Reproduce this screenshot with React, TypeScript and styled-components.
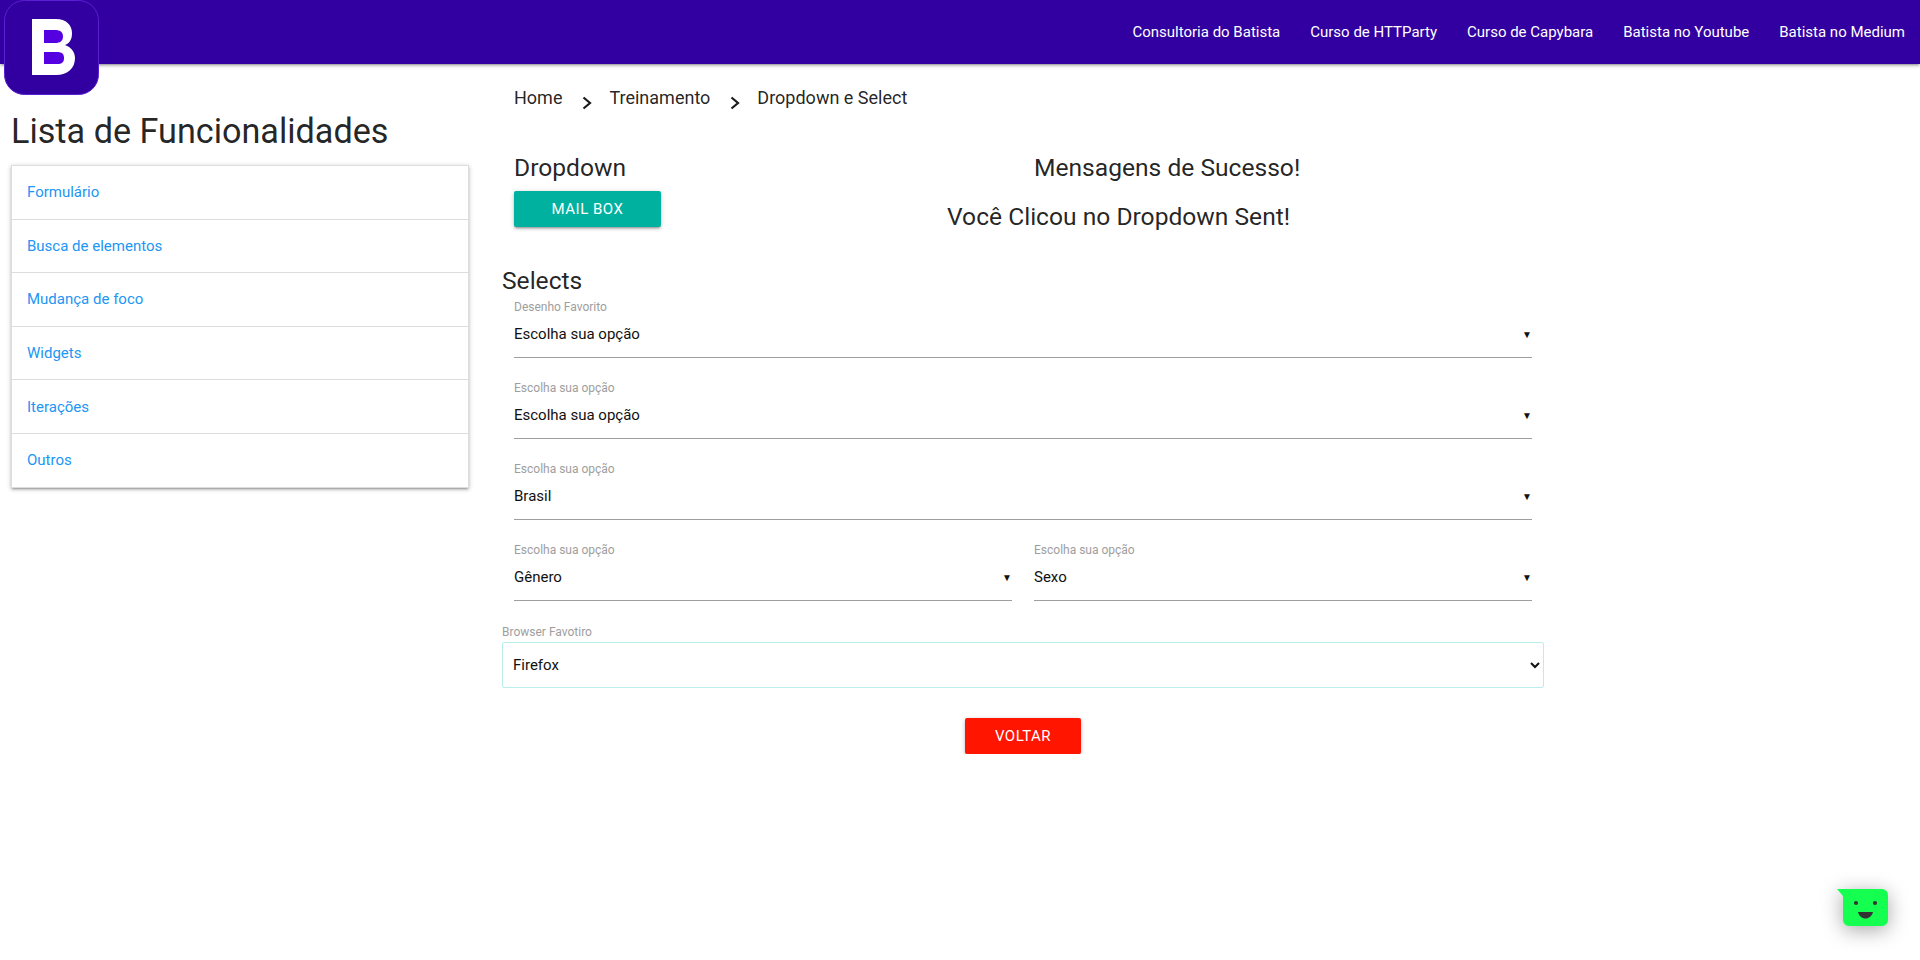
import styled, { createGlobalStyle } from 'styled-components';

const GlobalStyle = createGlobalStyle`
  html, body {
    margin: 0;
    padding: 0;
    background: #fff;
    font-family: Roboto, "Liberation Sans", sans-serif;
    font-size: 15px;
    color: rgba(0, 0, 0, 0.87);
  }
  * {
    box-sizing: border-box;
  }
`;

const Nav = styled.nav`
  height: 64px;
  background: #3200a0;
  box-shadow: 0 2px 2px 0 rgba(0, 0, 0, 0.14), 0 3px 1px -2px rgba(0, 0, 0, 0.12), 0 1px 5px 0 rgba(0, 0, 0, 0.2);
  display: flex;
  justify-content: flex-end;
`;

const NavLink = styled.a`
  padding: 0 15px;
  line-height: 64px;
  font-size: 15px;
  color: #fff;
`;

const Logo = styled.svg`
  position: absolute;
  left: 4px;
  top: 0;
  width: 95px;
  height: 95px;
`;

const Page = styled.div`
  display: flex;
`;

const Sidebar = styled.aside`
  width: 480px;
  padding: 0 11px;
`;

const SideTitle = styled.h4`
  margin: 49px 0 15px;
  font-size: 34.2px;
  line-height: 37px;
  font-weight: 400;
`;

const Collection = styled.ul`
  margin: 0;
  padding: 0;
  list-style: none;
  background: #fff;
  border: 1px solid #ddd;
  border-bottom: 0;
  box-shadow: 0 2px 2px 0 rgba(0, 0, 0, 0.14), 0 3px 1px -2px rgba(0, 0, 0, 0.12), 0 1px 5px 0 rgba(0, 0, 0, 0.2);
`;

const CollectionItem = styled.li`
  height: 53.6px;
  padding-left: 15px;
  border-bottom: 1px solid #ddd;
  display: flex;
  align-items: center;
  font-size: 15px;
  color: #2196f3;
`;

const Main = styled.main`
  width: 1042px;
  margin-left: 22px;
`;

const Breadcrumb = styled.div`
  display: flex;
  align-items: center;
  height: 42px;
  margin: 12px 0 0 12px;
  font-size: 18px;
`;

const Chevron = styled.svg`
  width: 12px;
  height: 14px;
  margin: 11px 16px 0 19px;
`;

const Hero = styled.section`
  display: flex;
  margin: 33px 0 0 12px;
`;

const DropdownColumn = styled.div`
  width: 433px;
`;

const SectionTitle = styled.h5`
  margin: 0;
  font-size: 24.6px;
  line-height: 34px;
  font-weight: 400;
`;

const Button = styled.button<{ $color: string }>`
  height: 36px;
  padding: 0 30px;
  border: 0;
  border-radius: 2px;
  background: ${props => props.$color};
  color: #fff;
  font-family: inherit;
  font-size: 15px;
  letter-spacing: 0.5px;
  box-shadow: 0 2px 2px 0 rgba(0, 0, 0, 0.14), 0 3px 1px -2px rgba(0, 0, 0, 0.12), 0 1px 5px 0 rgba(0, 0, 0, 0.2);
`;

const MailButton = styled(Button)`
  display: block;
  width: 147px;
  margin-top: 6px;
  padding: 0;
`;

const Messages = styled.div`
  display: flex;
  flex-direction: column;
  gap: 15px;
`;

const SuccessTitle = styled(SectionTitle)`
  margin-left: 87px;
`;

const SelectsTitle = styled(SectionTitle)`
  margin: 30px 0 0;
`;

const FieldRow = styled.div`
  display: flex;
  gap: 22px;
  padding: 0 12px;
`;

const Field = styled.div`
  flex: 1;
  margin-bottom: 21px;
`;

const FieldLabel = styled.label`
  display: block;
  height: 18px;
  line-height: 18px;
  font-size: 12px;
  color: #9e9e9e;
`;

const FakeSelect = styled.div`
  height: 42px;
  padding-bottom: 5px;
  border-bottom: 1px solid #9e9e9e;
  display: flex;
  align-items: center;
  justify-content: space-between;
  font-size: 15px;
  color: #111;
`;

const Caret = styled.span`
  font-size: 10px;
  width: 8px;
  margin-right: 2px;
  font-family: "Liberation Sans", sans-serif;
`;

const BrowserLabel = styled.label`
  display: block;
  margin-top: 1px;
  height: 19px;
  font-size: 12px;
  line-height: 18px;
  color: #9e9e9e;
`;

const BrowserSelect = styled.select`
  display: block;
  width: 100%;
  height: 46px;
  padding: 5px 6px;
  border: 1px solid #b8efeb;
  border-radius: 2px;
  background: #fff;
  font-family: inherit;
  font-size: 15px;
  color: #111;
`;

const BackRow = styled.div`
  display: flex;
  justify-content: center;
  margin-top: 30px;
`;

const ChatWidget = styled.svg`
  position: fixed;
  right: 31px;
  bottom: 34px;
  width: 52px;
  height: 37px;
  overflow: visible;
  filter: drop-shadow(0 4px 10px rgba(0, 0, 0, 0.35));
`;

const menu = ['Formulário', 'Busca de elementos', 'Mudança de foco', 'Widgets', 'Iterações', 'Outros'];
const links = ['Consultoria do Batista', 'Curso de HTTParty', 'Curso de Capybara', 'Batista no Youtube', 'Batista no Medium'];

const Arrow = () => (
  <Chevron viewBox="0 0 12 14">
    <path d="M2.5 1.5 L9 7 L2.5 12.5" fill="none" stroke="#1a1a1a" strokeWidth="2.2" />
  </Chevron>
);

const MaterialSelect = ({ label, value }: { label: string; value: string }) => (
  <Field>
    <FieldLabel>{label}</FieldLabel>
    <FakeSelect>
      {value}
      <Caret>▼</Caret>
    </FakeSelect>
  </Field>
);

export default function App() {
  return (
    <>
      <GlobalStyle />
      <Nav>
        {links.map(link => (
          <NavLink key={link}>{link}</NavLink>
        ))}
      </Nav>
      <Logo viewBox="0 0 95 95">
        <rect x="0.5" y="0.5" width="94" height="94" rx="20" fill="#3200a0" stroke="#5a1fd0" />
        <path
          d="M28 19 H52 C62 19 68 25 68 33 C68 39 66 43 61 45 C67 47 71 52 71 58 C71 68 64 75 52 75 H28 Z"
          fill="#fff"
        />
        <path d="M40 30 H51 C56 30 59 32 59 36.5 C59 41 56 43 51 43 H40 Z" fill="#5500e0" />
        <path d="M40 52 H53 C58 52 60 54 60 58 C60 62 58 64 53 64 H40 Z" fill="#5500e0" />
      </Logo>
      <Page>
        <Sidebar>
          <SideTitle>Lista de Funcionalidades</SideTitle>
          <Collection>
            {menu.map(item => (
              <CollectionItem key={item}>{item}</CollectionItem>
            ))}
          </Collection>
        </Sidebar>
        <Main>
          <Breadcrumb>
            Home
            <Arrow />
            Treinamento
            <Arrow />
            Dropdown e Select
          </Breadcrumb>
          <Hero>
            <DropdownColumn>
              <SectionTitle>Dropdown</SectionTitle>
              <MailButton $color="#00b1a0">MAIL BOX</MailButton>
            </DropdownColumn>
            <Messages>
              <SuccessTitle>Mensagens de Sucesso!</SuccessTitle>
              <SectionTitle>Você Clicou no Dropdown Sent!</SectionTitle>
            </Messages>
          </Hero>
          <SelectsTitle>Selects</SelectsTitle>
          <FieldRow>
            <MaterialSelect label="Desenho Favorito" value="Escolha sua opção" />
          </FieldRow>
          <FieldRow>
            <MaterialSelect label="Escolha sua opção" value="Escolha sua opção" />
          </FieldRow>
          <FieldRow>
            <MaterialSelect label="Escolha sua opção" value="Brasil" />
          </FieldRow>
          <FieldRow>
            <MaterialSelect label="Escolha sua opção" value="Gênero" />
            <MaterialSelect label="Escolha sua opção" value="Sexo" />
          </FieldRow>
          <BrowserLabel>Browser Favotiro</BrowserLabel>
          <BrowserSelect defaultValue="Firefox">
            <option>Firefox</option>
            <option>Chrome</option>
          </BrowserSelect>
          <BackRow>
            <Button $color="#ff1500">VOLTAR</Button>
          </BackRow>
        </Main>
      </Page>
      <ChatWidget viewBox="0 0 52 37">
        <path d="M0 0 H45 A6 6 0 0 1 51 6 V31 A6 6 0 0 1 45 37 H12 A6 6 0 0 1 6 31 V7 Z" fill="#14ff50" />
        <circle cx="19" cy="14" r="2.1" fill="#333" />
        <circle cx="38" cy="14" r="2.1" fill="#333" />
        <path d="M21 23 H36 C35 27 32 29.5 28.5 29.5 C25 29.5 22 27 21 23 Z" fill="#333" />
      </ChatWidget>
    </>
  );
}
